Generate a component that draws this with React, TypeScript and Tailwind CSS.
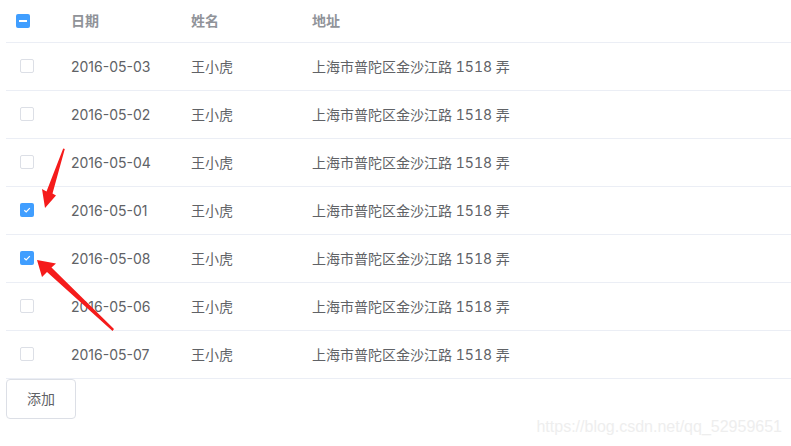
import React from "react";

const rows = [
  { date: "2016-05-03", checked: false },
  { date: "2016-05-02", checked: false },
  { date: "2016-05-04", checked: false },
  { date: "2016-05-01", checked: true },
  { date: "2016-05-08", checked: true },
  { date: "2016-05-06", checked: false },
  { date: "2016-05-07", checked: false },
];

function Checkbox({ checked, indeterminate }: { checked?: boolean; indeterminate?: boolean }) {
  if (indeterminate) {
    return (
      <span className="flex h-[14px] w-[14px] items-center justify-center rounded-[2px] bg-[#409eff]">
        <span className="h-[2px] w-[8px] bg-white" />
      </span>
    );
  }
  if (checked) {
    return (
      <span className="flex h-[14px] w-[14px] items-center justify-center rounded-[2px] bg-[#409eff]">
        <svg width="10" height="10" viewBox="0 0 10 10">
          <path d="M2.3 5.2 L4.2 7 L7.8 3.2" fill="none" stroke="white" strokeWidth="1.2" />
        </svg>
      </span>
    );
  }
  return <span className="block h-[14px] w-[14px] rounded-[2px] border border-[#dcdfe6] bg-white" />;
}

export default function App() {
  return (
    <div
      className="relative h-[446px] w-[791px] overflow-hidden bg-white pl-[6px] text-[14px] text-[#606266]"
      style={{ fontFamily: 'Inter, "Noto Sans CJK SC", sans-serif' }}
    >
      <table className="w-[785px] border-collapse">
        <thead>
          <tr className="h-[42px] border-b border-[#ebeef5] text-left text-[#909399]">
            <th className="w-[55px] pl-[10px]">
              <Checkbox indeterminate />
            </th>
            <th className="w-[120px] pl-[10px] font-bold">日期</th>
            <th className="w-[121px] pl-[10px] font-bold">姓名</th>
            <th className="pl-[10px] font-bold">地址</th>
          </tr>
        </thead>
        <tbody>
          {rows.map((r) => (
            <tr key={r.date} className="h-[48px] border-b border-[#ebeef5]">
              <td className="pl-[14px]">
                <Checkbox checked={r.checked} />
              </td>
              <td className="pl-[10px]">{r.date}</td>
              <td className="pl-[10px]">王小虎</td>
              <td className="pl-[10px] tabular-nums">上海市普陀区金沙江路 1518 弄</td>
            </tr>
          ))}
        </tbody>
      </table>

      <button className="h-[40px] w-[70px] rounded-[4px] border border-[#dcdfe6] bg-white text-[14px] text-[#606266]">
        添加
      </button>

      {/* red annotation arrows */}
      <svg className="pointer-events-none absolute left-0 top-0" width="791" height="446">
        <polygon
          points="64.8,149 52.5,193.5 56,195.5 45,208 42,189 46.5,191.5 63.2,148.6"
          fill="#f51b1b"
        />
        <polygon
          points="37,260 56,263.5 51.5,267.5 114,329 112.5,331 47,272 42,277"
          fill="#f51b1b"
        />
      </svg>

      <div
        className="absolute right-[9px] top-[415px] text-[16px] text-[#eeeeee]"
        style={{ fontFamily: '"Liberation Sans", Arial, sans-serif' }}
      >
        https://blog.csdn.net/qq_52959651
      </div>
    </div>
  );
}
